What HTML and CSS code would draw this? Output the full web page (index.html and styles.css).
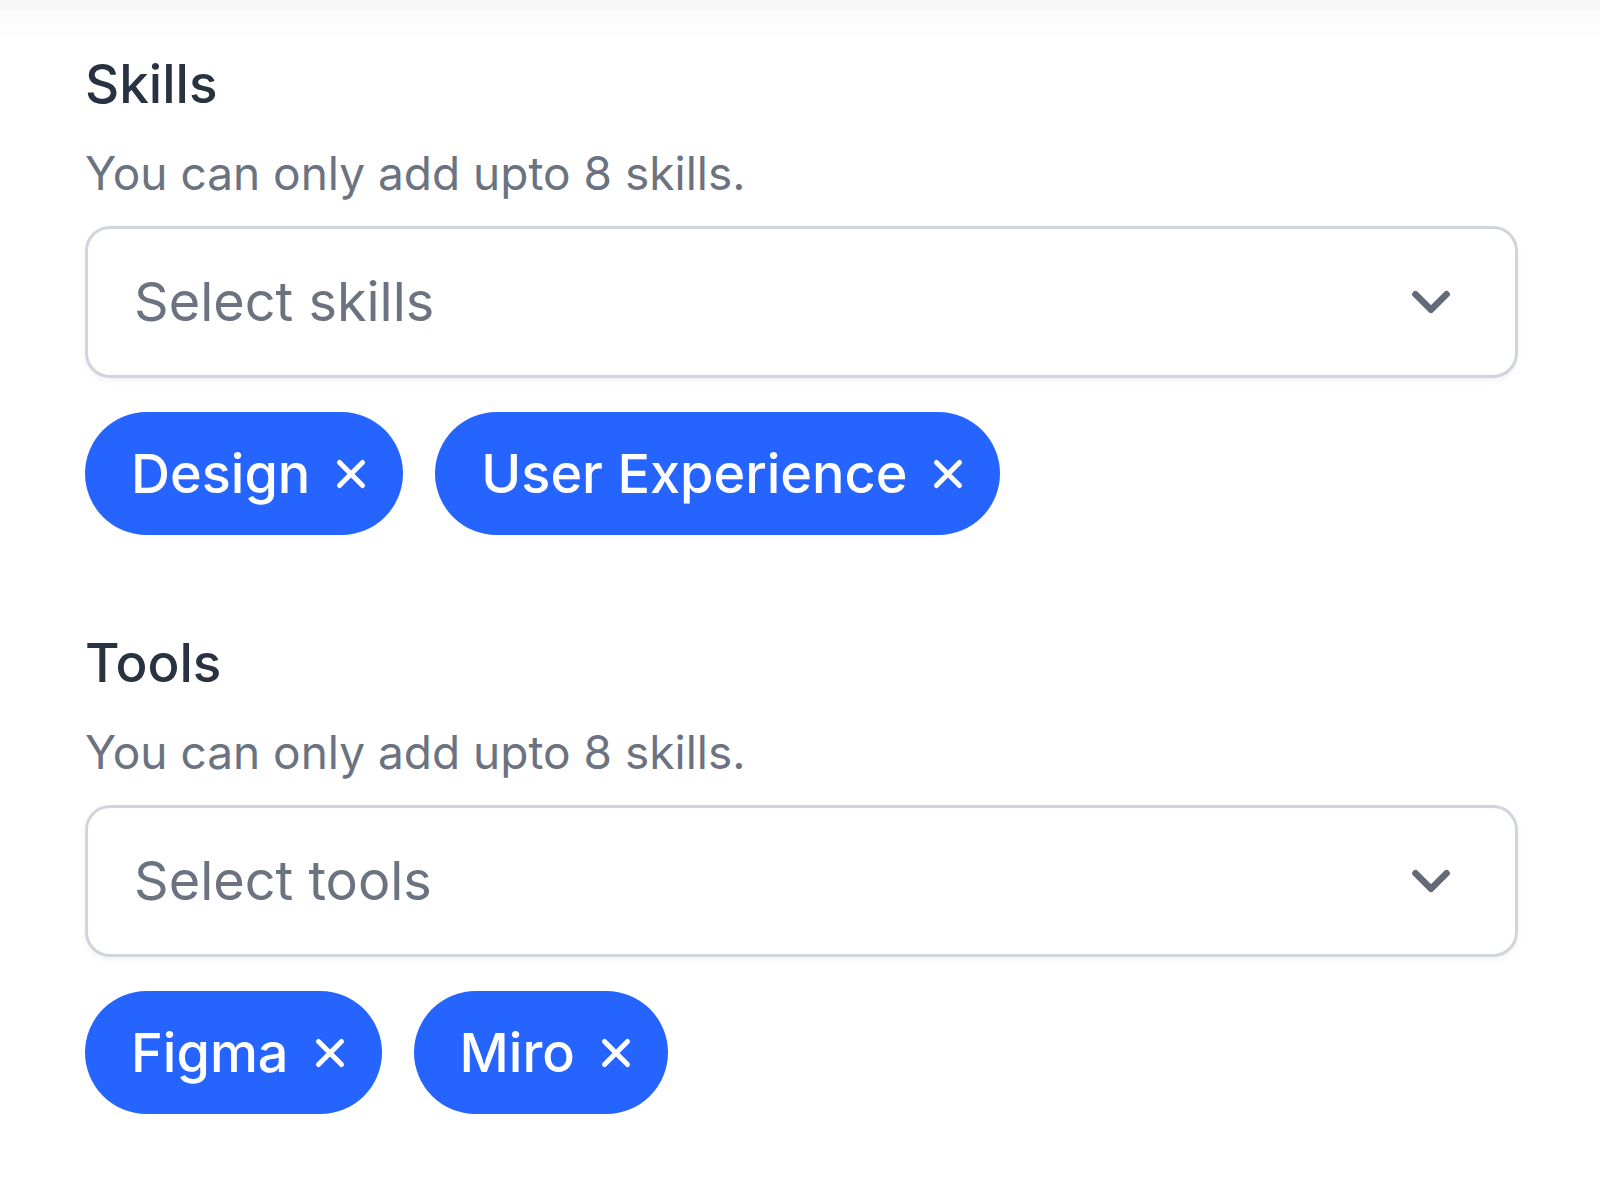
FILE: index.html
```html
<!DOCTYPE html>
<html lang="en">
<head>
<meta charset="utf-8">
<title>Skills and Tools</title>
<link rel="stylesheet" href="styles.css">
</head>
<body>
<div class="topband"></div>
<main class="form">
  <section class="field">
    <h2 class="field-title">Skills</h2>
    <p class="field-help">You can only add upto 8 skills.</p>
    <div class="select">
      <span class="select-placeholder">Select skills</span>
      <svg class="chevron" viewBox="0 0 24 24" fill="none" stroke="currentColor" stroke-width="2.6" stroke-linecap="round" stroke-linejoin="round"><path d="M6 9l6 6 6-6"/></svg>
    </div>
    <div class="chips">
      <span class="chip">Design<svg class="chip-x" viewBox="0 0 24 24" fill="none" stroke="currentColor" stroke-width="2.6" stroke-linecap="round"><path d="M6 6l12 12M18 6L6 18"/></svg></span>
      <span class="chip">User Experience<svg class="chip-x" viewBox="0 0 24 24" fill="none" stroke="currentColor" stroke-width="2.6" stroke-linecap="round"><path d="M6 6l12 12M18 6L6 18"/></svg></span>
    </div>
  </section>
  <section class="field">
    <h2 class="field-title">Tools</h2>
    <p class="field-help">You can only add upto 8 skills.</p>
    <div class="select">
      <span class="select-placeholder">Select tools</span>
      <svg class="chevron" viewBox="0 0 24 24" fill="none" stroke="currentColor" stroke-width="2.6" stroke-linecap="round" stroke-linejoin="round"><path d="M6 9l6 6 6-6"/></svg>
    </div>
    <div class="chips">
      <span class="chip">Figma<svg class="chip-x" viewBox="0 0 24 24" fill="none" stroke="currentColor" stroke-width="2.6" stroke-linecap="round"><path d="M6 6l12 12M18 6L6 18"/></svg></span>
      <span class="chip">Miro<svg class="chip-x" viewBox="0 0 24 24" fill="none" stroke="currentColor" stroke-width="2.6" stroke-linecap="round"><path d="M6 6l12 12M18 6L6 18"/></svg></span>
    </div>
  </section>
</main>
</body>
</html>
```

FILE: styles.css
```css
* { box-sizing: border-box; }

html, body {
  margin: 0;
  padding: 0;
  background: #ffffff;
  font-family: Inter, "Noto Sans", "Liberation Sans", sans-serif;
}

.topband {
  height: 36px;
  background: linear-gradient(#f7f7f8 0, #f8f8f9 10px, #fbfbfc 12px, #fdfdfd 34px, #ffffff 36px);
}

.form {
  padding: 16px 82px 40px 85px;
  display: flex;
  flex-direction: column;
  gap: 96px;
}

.field {
  display: flex;
  flex-direction: column;
}

.field-title {
  margin: 0;
  font-size: 53px;
  line-height: 64px;
  font-weight: 500;
  color: #283241;
}

.field-help {
  margin: 27px 0 0;
  font-size: 46px;
  line-height: 60px;
  font-weight: 400;
  color: #6b7280;
}

.select {
  margin-top: 23px;
  height: 152px;
  border: 3px solid #d1d5db;
  border-radius: 25px;
  background: #ffffff;
  box-shadow: 0 3px 6px rgba(17, 24, 39, 0.05);
  display: flex;
  align-items: center;
  justify-content: space-between;
  padding: 0 53px 0 46px;
}

.select-placeholder {
  font-size: 54px;
  line-height: 1;
  color: #6b7280;
}

.chevron {
  width: 62px;
  height: 62px;
  color: #646a78;
  flex: none;
}

.chips {
  margin-top: 34px;
  display: flex;
  flex-wrap: wrap;
  gap: 32px;
}

.chip {
  height: 123px;
  border-radius: 62px;
  background: #2664ff;
  color: #ffffff;
  display: inline-flex;
  align-items: center;
  padding: 0 29px 0 46px;
  font-size: 54px;
  font-weight: 500;
  line-height: 1;
}

.chip-x {
  width: 46px;
  height: 46px;
  margin-left: 18px;
  flex: none;
}
```
